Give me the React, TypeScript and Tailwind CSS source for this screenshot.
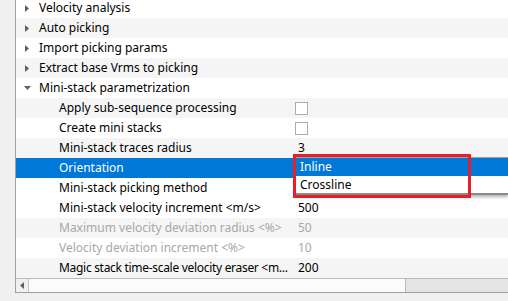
import React from "react";

type Row = {
  label: string;
  level: 0 | 1;
  arrow?: "right" | "down";
  value?: string;
  checkbox?: boolean;
  disabled?: boolean;
  tight?: boolean;
  bg: "white" | "gray" | "blue";
};

const rows: Row[] = [
  { label: "Velocity analysis", level: 0, arrow: "right", bg: "white" },
  { label: "Auto picking", level: 0, arrow: "right", bg: "gray" },
  { label: "Import picking params", level: 0, arrow: "right", bg: "white" },
  { label: "Extract base Vrms to picking", level: 0, arrow: "right", bg: "gray" },
  { label: "Mini-stack parametrization", level: 0, arrow: "down", bg: "white" },
  { label: "Apply sub-sequence processing", level: 1, checkbox: true, bg: "gray" },
  { label: "Create mini stacks", level: 1, checkbox: true, bg: "white" },
  { label: "Mini-stack traces radius", level: 1, value: "3", bg: "gray" },
  { label: "Orientation", level: 1, bg: "blue" },
  { label: "Mini-stack picking method", level: 1, bg: "white" },
  { label: "Mini-stack velocity increment <m/s>", level: 1, value: "500", bg: "white" },
  { label: "Maximum velocity deviation radius <%>", level: 1, value: "50", disabled: true, bg: "gray" },
  { label: "Velocity deviation increment <%>", level: 1, value: "10", disabled: true, bg: "white" },
  { label: "Magic stack time-scale velocity eraser <m...", level: 1, value: "200", tight: true, bg: "gray" },
];

function Arrow({ dir }: { dir: "right" | "down" }) {
  if (dir === "right") {
    return (
      <svg width="4" height="7" viewBox="0 0 4 7" className="block">
        <path d="M0 0 L4 3.5 L0 7 Z" fill="#5f5f5f" />
      </svg>
    );
  }
  return (
    <svg width="7" height="4" viewBox="0 0 7 4" className="block">
      <path d="M0 0 L7 0 L3.5 4 Z" fill="#5f5f5f" />
    </svg>
  );
}

export default function App() {
  return (
    <div
      className="relative w-[508px] h-[301px] overflow-hidden bg-[#f0f0f0] flex text-[12px]"
      style={{ fontFamily: '"Noto Sans", "Liberation Sans", sans-serif' }}
    >
      <div className="w-[15px] shrink-0" />
      <div className="flex-1 h-[293px] border-l border-b border-[#a0a0a0] bg-white flex flex-col">
        <div className="h-[278px] overflow-hidden">
          <div className="-mt-[2px] flex flex-col">
            {rows.map((r, i) => {
              const bg =
                r.bg === "blue" ? "bg-[#0078d7]" : r.bg === "gray" ? "bg-[#f5f5f5]" : "bg-white";
              const color = r.bg === "blue" ? "text-white" : r.disabled ? "text-[#a8a8a8]" : "text-black";
              return (
                <div key={i} className={`h-[20px] flex items-center ${bg} ${color}`}>
                  <div className="w-[279px] shrink-0 flex items-center overflow-hidden whitespace-nowrap">
                    {r.level === 0 ? (
                      <>
                        <div className="w-[22px] shrink-0 flex items-center justify-center">
                          {r.arrow && <Arrow dir={r.arrow} />}
                        </div>
                        <span className="pl-[1px]">{r.label}</span>
                      </>
                    ) : (
                      <span className={`pl-[43px] ${r.tight ? "tracking-[-0.3px]" : ""}`}>{r.label}</span>
                    )}
                  </div>
                  <div className="flex-1 flex items-center whitespace-nowrap">
                    {r.checkbox ? (
                      <div className="w-[13px] h-[13px] border border-[#adadad] bg-white" />
                    ) : r.value ? (
                      <span className="pl-[3px]">{r.value}</span>
                    ) : null}
                  </div>
                </div>
              );
            })}
          </div>
        </div>
        <div className="h-[14px] border-t border-[#bcbcbc] flex">
          <div className="w-[13px] h-full bg-[#f0f0f0] border-r border-[#c8c8c8] flex items-center justify-center">
            <svg width="4" height="7" viewBox="0 0 4 7" className="block">
              <path d="M4 0 L0 3.5 L4 7 Z" fill="#606060" />
            </svg>
          </div>
          <div className="w-[377px] h-full bg-[#fbfbfb] border-r border-[#bcbcbc]" />
          <div className="flex-1 h-full bg-[#e4e4e4]" />
        </div>
      </div>

      {/* Combo popup */}
      <div className="absolute left-[295px] top-[157px] w-[213px] h-[38px] bg-white border-t border-[#a0a0a0] border-b-2 border-b-[#8a8a8a] shadow-[0_2px_3px_rgba(0,0,0,0.3)] flex flex-col">
        <div className="h-[18px] bg-[#0078d7] text-white flex items-center pl-[5px]">Inline</div>
        <div className="h-[17px] text-black flex items-center pl-[5px]">Crossline</div>
      </div>

      {/* Red annotation rectangle */}
      <div className="absolute left-[293px] top-[154px] w-[178px] h-[44px] border-[3px] border-[#e5202a] pointer-events-none" />
    </div>
  );
}
